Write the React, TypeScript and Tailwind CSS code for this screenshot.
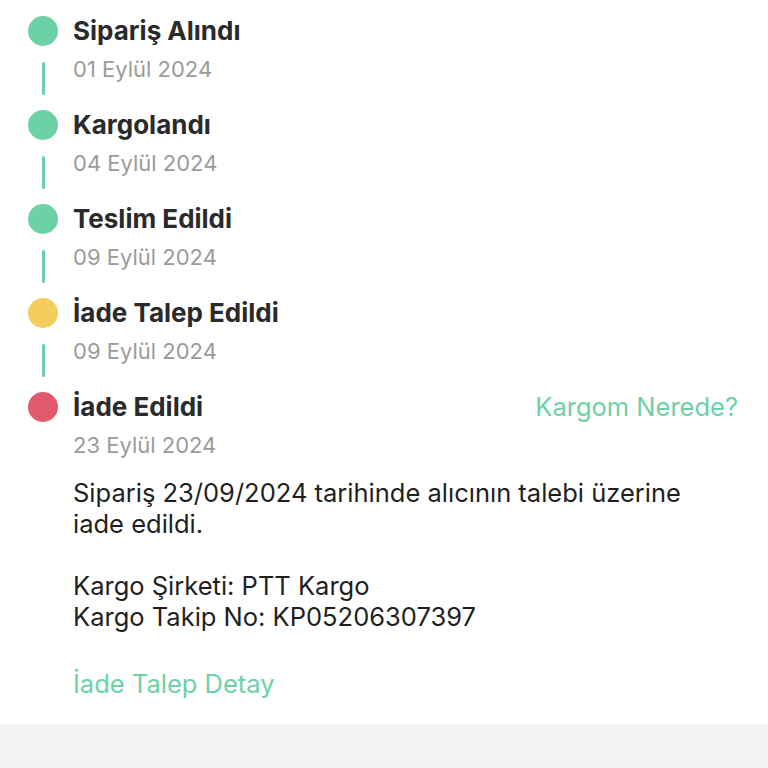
import React from "react"

type Step = {
  title: string
  date: string
  color: string
  last?: boolean
}

const steps: Step[] = [
  { title: "Sipariş Alındı", date: "01 Eylül 2024", color: "bg-[#6dd1a6]" },
  { title: "Kargolandı", date: "04 Eylül 2024", color: "bg-[#6dd1a6]" },
  { title: "Teslim Edildi", date: "09 Eylül 2024", color: "bg-[#6dd1a6]" },
  { title: "İade Talep Edildi", date: "09 Eylül 2024", color: "bg-[#f5cc5e]" },
  { title: "İade Edildi", date: "23 Eylül 2024", color: "bg-[#e1596d]", last: true },
]

function TimelineStep({ step }: { step: Step }) {
  return (
    <div className="flex">
      {/* dot + connector */}
      <div className="flex w-[30px] flex-col items-center">
        <div className={`h-[30px] w-[30px] rounded-full ${step.color}`} />
        {!step.last && <div className="mt-[16px] mb-[15px] h-[33px] w-[3px] rounded-full bg-[#6dd1a6]" />}
      </div>

      <div className="ml-[15px] flex-1">
        <div className="flex items-center justify-between">
          <span className="text-[26px] leading-[30px] font-bold text-[#2a2a2a]">{step.title}</span>
          {step.last && (
            <a href="#" className="text-[25.5px] leading-[30px] text-[#6dd1a6]">
              Kargom Nerede?
            </a>
          )}
        </div>
        <div className="mt-[9px] text-[22px] leading-[28px] text-[#9b9b9b]">{step.date}</div>
      </div>
    </div>
  )
}

export default function App() {
  return (
    <div className="min-h-[768px] bg-white font-['Inter',sans-serif]">
      <div className="pl-[28px] pr-[30px] pt-[16px] pb-[25px]">
        {steps.map((step) => (
          <TimelineStep key={step.title} step={step} />
        ))}

        {/* return details */}
        <div className="ml-[45px] mt-[18px] text-[25.5px] leading-[31px] text-[#1f1f1f]">
          <p className="max-w-[620px]">Sipariş 23/09/2024 tarihinde alıcının talebi üzerine iade edildi.</p>
          <p className="mt-[31px]">Kargo Şirketi: PTT Kargo</p>
          <p>Kargo Takip No: KP05206307397</p>
          <a href="#" className="mt-[36px] block text-[#6dd1a6]">
            İade Talep Detay
          </a>
        </div>
      </div>
      <div className="h-[45px] bg-[#f4f4f5]" />
    </div>
  )
}
